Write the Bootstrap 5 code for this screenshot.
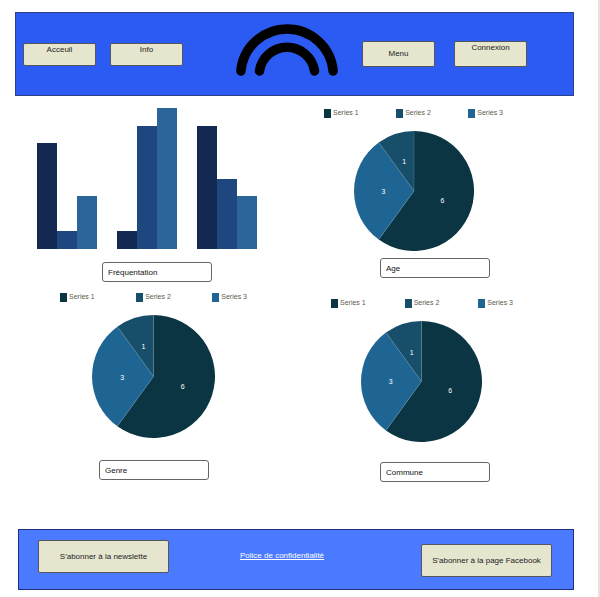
<!DOCTYPE html>
<html lang="fr">
<head>
<meta charset="utf-8">
<meta name="viewport" content="width=device-width, initial-scale=1">
<title>Tableau de bord</title>
<link rel="stylesheet" href="https://cdn.jsdelivr.net/npm/bootstrap@5.3.0/dist/css/bootstrap.min.css">
<style>
  body { font-family: "Liberation Sans", Arial, sans-serif; font-size: 8px; line-height: 12px; color: #111; background: #fff; }
  .page { border-right: 2px solid #e4e4dc; min-height: 100vh; }
  .topbar { background: #2b5bf2; border: 1px solid #2c418c; margin: 12px 24px 0 15px; padding: 11px 46px 11px 7px; min-height: 84px; }
  .bottombar { background: #497aff; border: 1px solid #20307a; margin: 47px 24px 0 18px; padding: 10px 21px 12px 19px; }
  .btn-sand { --bs-btn-bg: #e6e6cf; --bs-btn-color: #222; --bs-btn-border-color: #55565c; --bs-btn-hover-bg: #dadabf; --bs-btn-hover-color: #222; --bs-btn-hover-border-color: #55565c; font-size: 8px; line-height: 12px; padding: 0; border-radius: 2px; }
  .btn-short { width: 73px; height: 23px; }
  .btn-tall { width: 73px; height: 26px; }
  .btn-wide { width: 131px; height: 33px; }
  .nav-left { gap: 14px; }
  .nav-right { gap: 19px; margin-left: 24px; }
  .privacy { margin: 10px 0 0 71px; }
  .name-box { width: 110px; height: 20px; font-size: 8px; line-height: 12px; padding: 0 5px; border: 1px solid #666; border-radius: 3px; color: #111; }
  .bars { height: 141px; width: 220px; gap: 20px; }
  .bar-group > div { flex: 1; }
  .tone-a { background: #142952; }
  .tone-b { background: #1f477f; }
  .tone-c { background: #2b659a; }
  .legend-line { font-size: 7px; color: #5c5a4c; }
  .legend-line li { gap: 2px; }
  .swatch { width: 7px; height: 9px; }
  .pie-a { background: #0b3543; fill: #0b3543; }
  .pie-b { background: #174f6b; fill: #174f6b; }
  .pie-c { background: #1f6594; fill: #1f6594; }
  .pie text { fill: #fff; font-size: 7px; text-anchor: middle; }
  .panel-visits { padding: 12px 0 0 37px; }
  .panel-visits .name-box { margin: 13px 0 0 65px; }
  .panel-age { padding: 11px 0 0 25px; }
  .panel-age .legend-line { width: 179px; }
  .panel-age .pie { width: 120px; margin: 12px 0 0 30px; }
  .panel-age .name-box { margin: 7px 0 0 56px; }
  .panel-gender { padding: 9px 0 0 60px; }
  .panel-gender .legend-line { width: 187px; }
  .panel-gender .pie { width: 123px; margin: 12px 0 0 32px; }
  .panel-gender .name-box { margin: 22px 0 0 39px; }
  .panel-town { padding: 15px 0 0 32px; }
  .panel-town .legend-line { width: 182px; }
  .panel-town .pie { width: 121px; margin: 12px 0 0 30px; }
  .panel-town .name-box { margin: 20px 0 0 49px; }
</style>
<script src="https://cdn.jsdelivr.net/npm/bootstrap@5.3.0/dist/js/bootstrap.bundle.min.js"></script>
</head>
<body>
<svg class="d-none" aria-hidden="true">
  <symbol id="pie" viewBox="-61 -61 122 122">
    <path class="pie-a" d="M0 0V-61A61 61 0 1 1 -35.85 49.35Z"/>
    <path class="pie-c" d="M0 0L-35.85 49.35A61 61 0 0 1 -35.85 -49.35Z"/>
    <path class="pie-b" d="M0 0L-35.85 -49.35A61 61 0 0 1 0 -61Z"/>
    <path d="M0 -61V0L-35.85 49.35M0 0L-35.85 -49.35" fill="none" stroke="#5f8ba3" stroke-width=".4"/>
  </symbol>
</svg>
<div class="page d-flow-root overflow-hidden">
  <header class="topbar d-flex align-items-center">
    <nav class="nav-left d-flex me-auto" aria-label="Principal">
      <button type="button" class="btn btn-sand btn-short d-flex justify-content-center align-items-start">Acceuil</button>
      <button type="button" class="btn btn-sand btn-short d-flex justify-content-center align-items-start">Info</button>
    </nav>
    <svg width="104" height="60" viewBox="234 24 104 60" fill="none" stroke="#000" stroke-width="9.5" stroke-linecap="round" role="img" aria-label="Logo">
      <path d="M240.9 71A46.3 46.3 0 0 1 333.1 71M259.5 71A27.8 27.8 0 0 1 314.5 71"/>
    </svg>
    <div class="nav-right d-flex">
      <button type="button" class="btn btn-sand btn-tall">Menu</button>
      <button type="button" class="btn btn-sand btn-tall d-flex justify-content-center align-items-start">Connexion</button>
    </div>
  </header>

  <main class="row g-0">
    <section class="col-6 panel-visits">
      <div class="bars d-flex" role="img" aria-label="Fréquentation">
        <div class="bar-group d-flex align-items-end flex-fill">
          <div class="tone-a" style="height:75%"></div><div class="tone-b" style="height:12.5%"></div><div class="tone-c" style="height:37.5%"></div>
        </div>
        <div class="bar-group d-flex align-items-end flex-fill">
          <div class="tone-a" style="height:12.5%"></div><div class="tone-b" style="height:87.5%"></div><div class="tone-c" style="height:100%"></div>
        </div>
        <div class="bar-group d-flex align-items-end flex-fill">
          <div class="tone-a" style="height:87.5%"></div><div class="tone-b" style="height:50%"></div><div class="tone-c" style="height:37.5%"></div>
        </div>
      </div>
      <input class="name-box d-block" type="text" value="Fréquentation" aria-label="Titre du graphique de fréquentation">
    </section>

    <section class="col-6 panel-age">
      <ul class="legend-line list-unstyled d-flex justify-content-between mb-0">
        <li class="d-flex align-items-center"><span class="swatch pie-a"></span>Series 1</li>
        <li class="d-flex align-items-center"><span class="swatch pie-b"></span>Series 2</li>
        <li class="d-flex align-items-center"><span class="swatch pie-c"></span>Series 3</li>
      </ul>
      <svg class="pie d-block" viewBox="-61 -61 122 122">
        <use href="#pie" x="-61" y="-61" width="122" height="122"/>
        <text x="29" y="12">6</text><text x="-31" y="3">3</text><text x="-10" y="-27">1</text>
      </svg>
      <input class="name-box d-block" type="text" value="Age" aria-label="Titre du graphique par âge">
    </section>

    <section class="col-6 panel-gender">
      <ul class="legend-line list-unstyled d-flex justify-content-between mb-0">
        <li class="d-flex align-items-center"><span class="swatch pie-a"></span>Series 1</li>
        <li class="d-flex align-items-center"><span class="swatch pie-b"></span>Series 2</li>
        <li class="d-flex align-items-center"><span class="swatch pie-c"></span>Series 3</li>
      </ul>
      <svg class="pie d-block" viewBox="-61 -61 122 122">
        <use href="#pie" x="-61" y="-61" width="122" height="122"/>
        <text x="29" y="12">6</text><text x="-31" y="3">3</text><text x="-10" y="-27">1</text>
      </svg>
      <input class="name-box d-block" type="text" value="Genre" aria-label="Titre du graphique par genre">
    </section>

    <section class="col-6 panel-town">
      <ul class="legend-line list-unstyled d-flex justify-content-between mb-0">
        <li class="d-flex align-items-center"><span class="swatch pie-a"></span>Series 1</li>
        <li class="d-flex align-items-center"><span class="swatch pie-b"></span>Series 2</li>
        <li class="d-flex align-items-center"><span class="swatch pie-c"></span>Series 3</li>
      </ul>
      <svg class="pie d-block" viewBox="-61 -61 122 122">
        <use href="#pie" x="-61" y="-61" width="122" height="122"/>
        <text x="29" y="12">6</text><text x="-31" y="3">3</text><text x="-10" y="-27">1</text>
      </svg>
      <input class="name-box d-block" type="text" value="Commune" aria-label="Titre du graphique par commune">
    </section>
  </main>

  <footer class="bottombar d-flex align-items-start">
    <button type="button" class="btn btn-sand btn-wide">S'abonner à la newslette</button>
    <a class="privacy text-white text-decoration-underline" href="#">Police de confidentialité</a>
    <button type="button" class="btn btn-sand btn-wide ms-auto mt-1">S'abonner à la page Facebook</button>
  </footer>
</div>
</body>
</html>
